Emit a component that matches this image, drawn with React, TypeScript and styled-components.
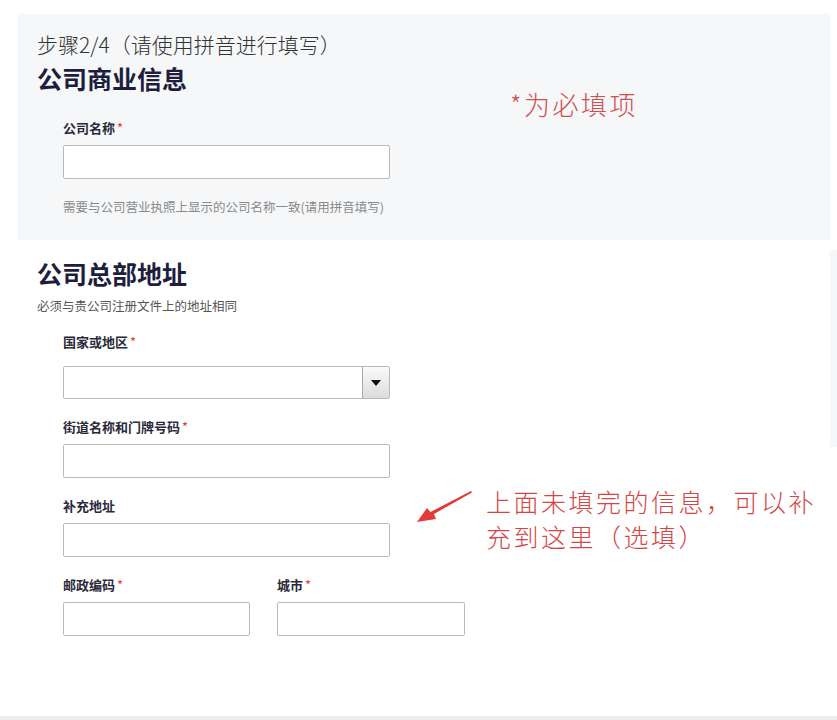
import React, { FC } from "react";
import styled, { createGlobalStyle } from "styled-components";

const GlobalStyle = createGlobalStyle`
  html, body {
    margin: 0;
    padding: 0;
    background: #ffffff;
  }
  body {
    font-family: "Noto Sans CJK SC", "Noto Sans", "Liberation Sans", sans-serif;
    color: #2a2a3a;
  }
`;

const Page = styled.div`
  position: relative;
  width: 837px;
  height: 720px;
  padding-top: 14px;
  box-sizing: border-box;
  overflow: hidden;
`;

const Panel = styled.section`
  margin-left: 18px;
  width: 812px;
  height: 226px;
  box-sizing: border-box;
  padding: 16px 0 0 19px;
  background: #f6f7f9;
`;

const StepTitle = styled.div`
  font-size: 21px;
  line-height: 28px;
  font-weight: 300;
  color: #333333;
`;

const SectionHeading = styled.h2<{ $top?: number }>`
  margin: ${(p) => p.$top ?? 4}px 0 0;
  font-size: 25px;
  line-height: 32px;
  font-weight: 700;
  color: #1d1e3d;
`;

const SubText = styled.div`
  margin-top: 9px;
  font-size: 12.5px;
  line-height: 16px;
  color: #555555;
`;

const Fields = styled.div<{ $top: number }>`
  margin: ${(p) => p.$top}px 0 0 26px;
  display: flex;
  flex-direction: column;
  gap: 20px;
`;

const Field = styled.div<{ $width?: number }>`
  display: flex;
  flex-direction: column;
  width: ${(p) => p.$width ?? 327}px;
`;

const Label = styled.label<{ $gap?: number }>`
  font-size: 13px;
  line-height: 16px;
  font-weight: 700;
  color: #2a2a3a;
  margin-bottom: ${(p) => p.$gap ?? 9}px;
`;

const Star = styled.span`
  color: #d9403c;
  margin-left: 2px;
  font-weight: 400;
`;

const TextInput = styled.input`
  height: 34px;
  box-sizing: border-box;
  border: 1px solid #b9b9b9;
  border-radius: 2px;
  background: #ffffff;
  padding: 0 8px;
  font-size: 13px;
  outline: none;
`;

const Hint = styled.div`
  margin-top: 20px;
  font-size: 12.5px;
  line-height: 16px;
  color: #8a8a8a;
`;

const SelectBox = styled.div`
  height: 33px;
  box-sizing: border-box;
  border: 1px solid #b9b9b9;
  border-radius: 2px;
  background: #ffffff;
  display: flex;
  justify-content: flex-end;
`;

const SelectButton = styled.div`
  width: 26px;
  border-left: 1px solid #a8a8a8;
  background: linear-gradient(#fafafa, #dcdcdc);
  display: flex;
  align-items: center;
  justify-content: center;
`;

const Caret = styled.span`
  width: 0;
  height: 0;
  border-left: 5px solid transparent;
  border-right: 5px solid transparent;
  border-top: 6px solid #111111;
`;

const AddressSection = styled.section`
  display: flex;
`;

const AddressMain = styled.div`
  flex: 1;
  padding: 0 0 0 37px;
`;

const SideStrip = styled.div`
  width: 7px;
  height: 197px;
  margin-top: 10px;
  background: #f6f7f9;
`;

const Row = styled.div`
  display: flex;
  gap: 27px;
`;

const Footer = styled.div`
  position: absolute;
  left: 0;
  right: 0;
  top: 716px;
  height: 4px;
  background: #ededed;
`;

const RequiredNote = styled.div`
  position: absolute;
  left: 510px;
  top: 87px;
  font-size: 26px;
  line-height: 34px;
  letter-spacing: 2.5px;
  font-weight: 300;
  color: #d0504f;
`;

const Annotation = styled.div`
  position: absolute;
  left: 486px;
  top: 484px;
  font-size: 25px;
  line-height: 35px;
  letter-spacing: 2.5px;
  font-weight: 300;
  color: #d64545;
`;

const ArrowSvg = styled.svg`
  position: absolute;
  left: 410px;
  top: 484px;
`;

const Required: FC = () => <Star>*</Star>;

export default function App() {
  return (
    <Page>
      <GlobalStyle />
      <Panel>
        <StepTitle>步骤2/4（请使用拼音进行填写）</StepTitle>
        <SectionHeading>公司商业信息</SectionHeading>
        <Fields $top={26}>
          <Field>
            <Label>
              公司名称
              <Required />
            </Label>
            <TextInput />
            <Hint>需要与公司营业执照上显示的公司名称一致(请用拼音填写)</Hint>
          </Field>
        </Fields>
      </Panel>

      <AddressSection>
        <AddressMain>
          <SectionHeading $top={17}>公司总部地址</SectionHeading>
          <SubText>必须与贵公司注册文件上的地址相同</SubText>
          <Fields $top={20}>
            <Field>
              <Label $gap={16}>
                国家或地区
                <Required />
              </Label>
              <SelectBox>
                <SelectButton>
                  <Caret />
                </SelectButton>
              </SelectBox>
            </Field>
            <Field>
              <Label>
                街道名称和门牌号码
                <Required />
              </Label>
              <TextInput />
            </Field>
            <Field>
              <Label>补充地址</Label>
              <TextInput />
            </Field>
            <Row>
              <Field $width={187}>
                <Label>
                  邮政编码
                  <Required />
                </Label>
                <TextInput />
              </Field>
              <Field $width={188}>
                <Label>
                  城市
                  <Required />
                </Label>
                <TextInput />
              </Field>
            </Row>
          </Fields>
        </AddressMain>
        <SideStrip />
      </AddressSection>

      <RequiredNote>*为必填项</RequiredNote>

      <ArrowSvg width="66" height="44" viewBox="0 0 66 44">
        <path
          d="M61 7 L62 8.5 L24 30 L26 35 L7 38 L17 24 L20.5 28 Z"
          fill="#e23b3b"
        />
      </ArrowSvg>
      <Annotation>
        上面未填完的信息，可以补
        <br />
        充到这里（选填）
      </Annotation>

      <Footer />
    </Page>
  );
}
